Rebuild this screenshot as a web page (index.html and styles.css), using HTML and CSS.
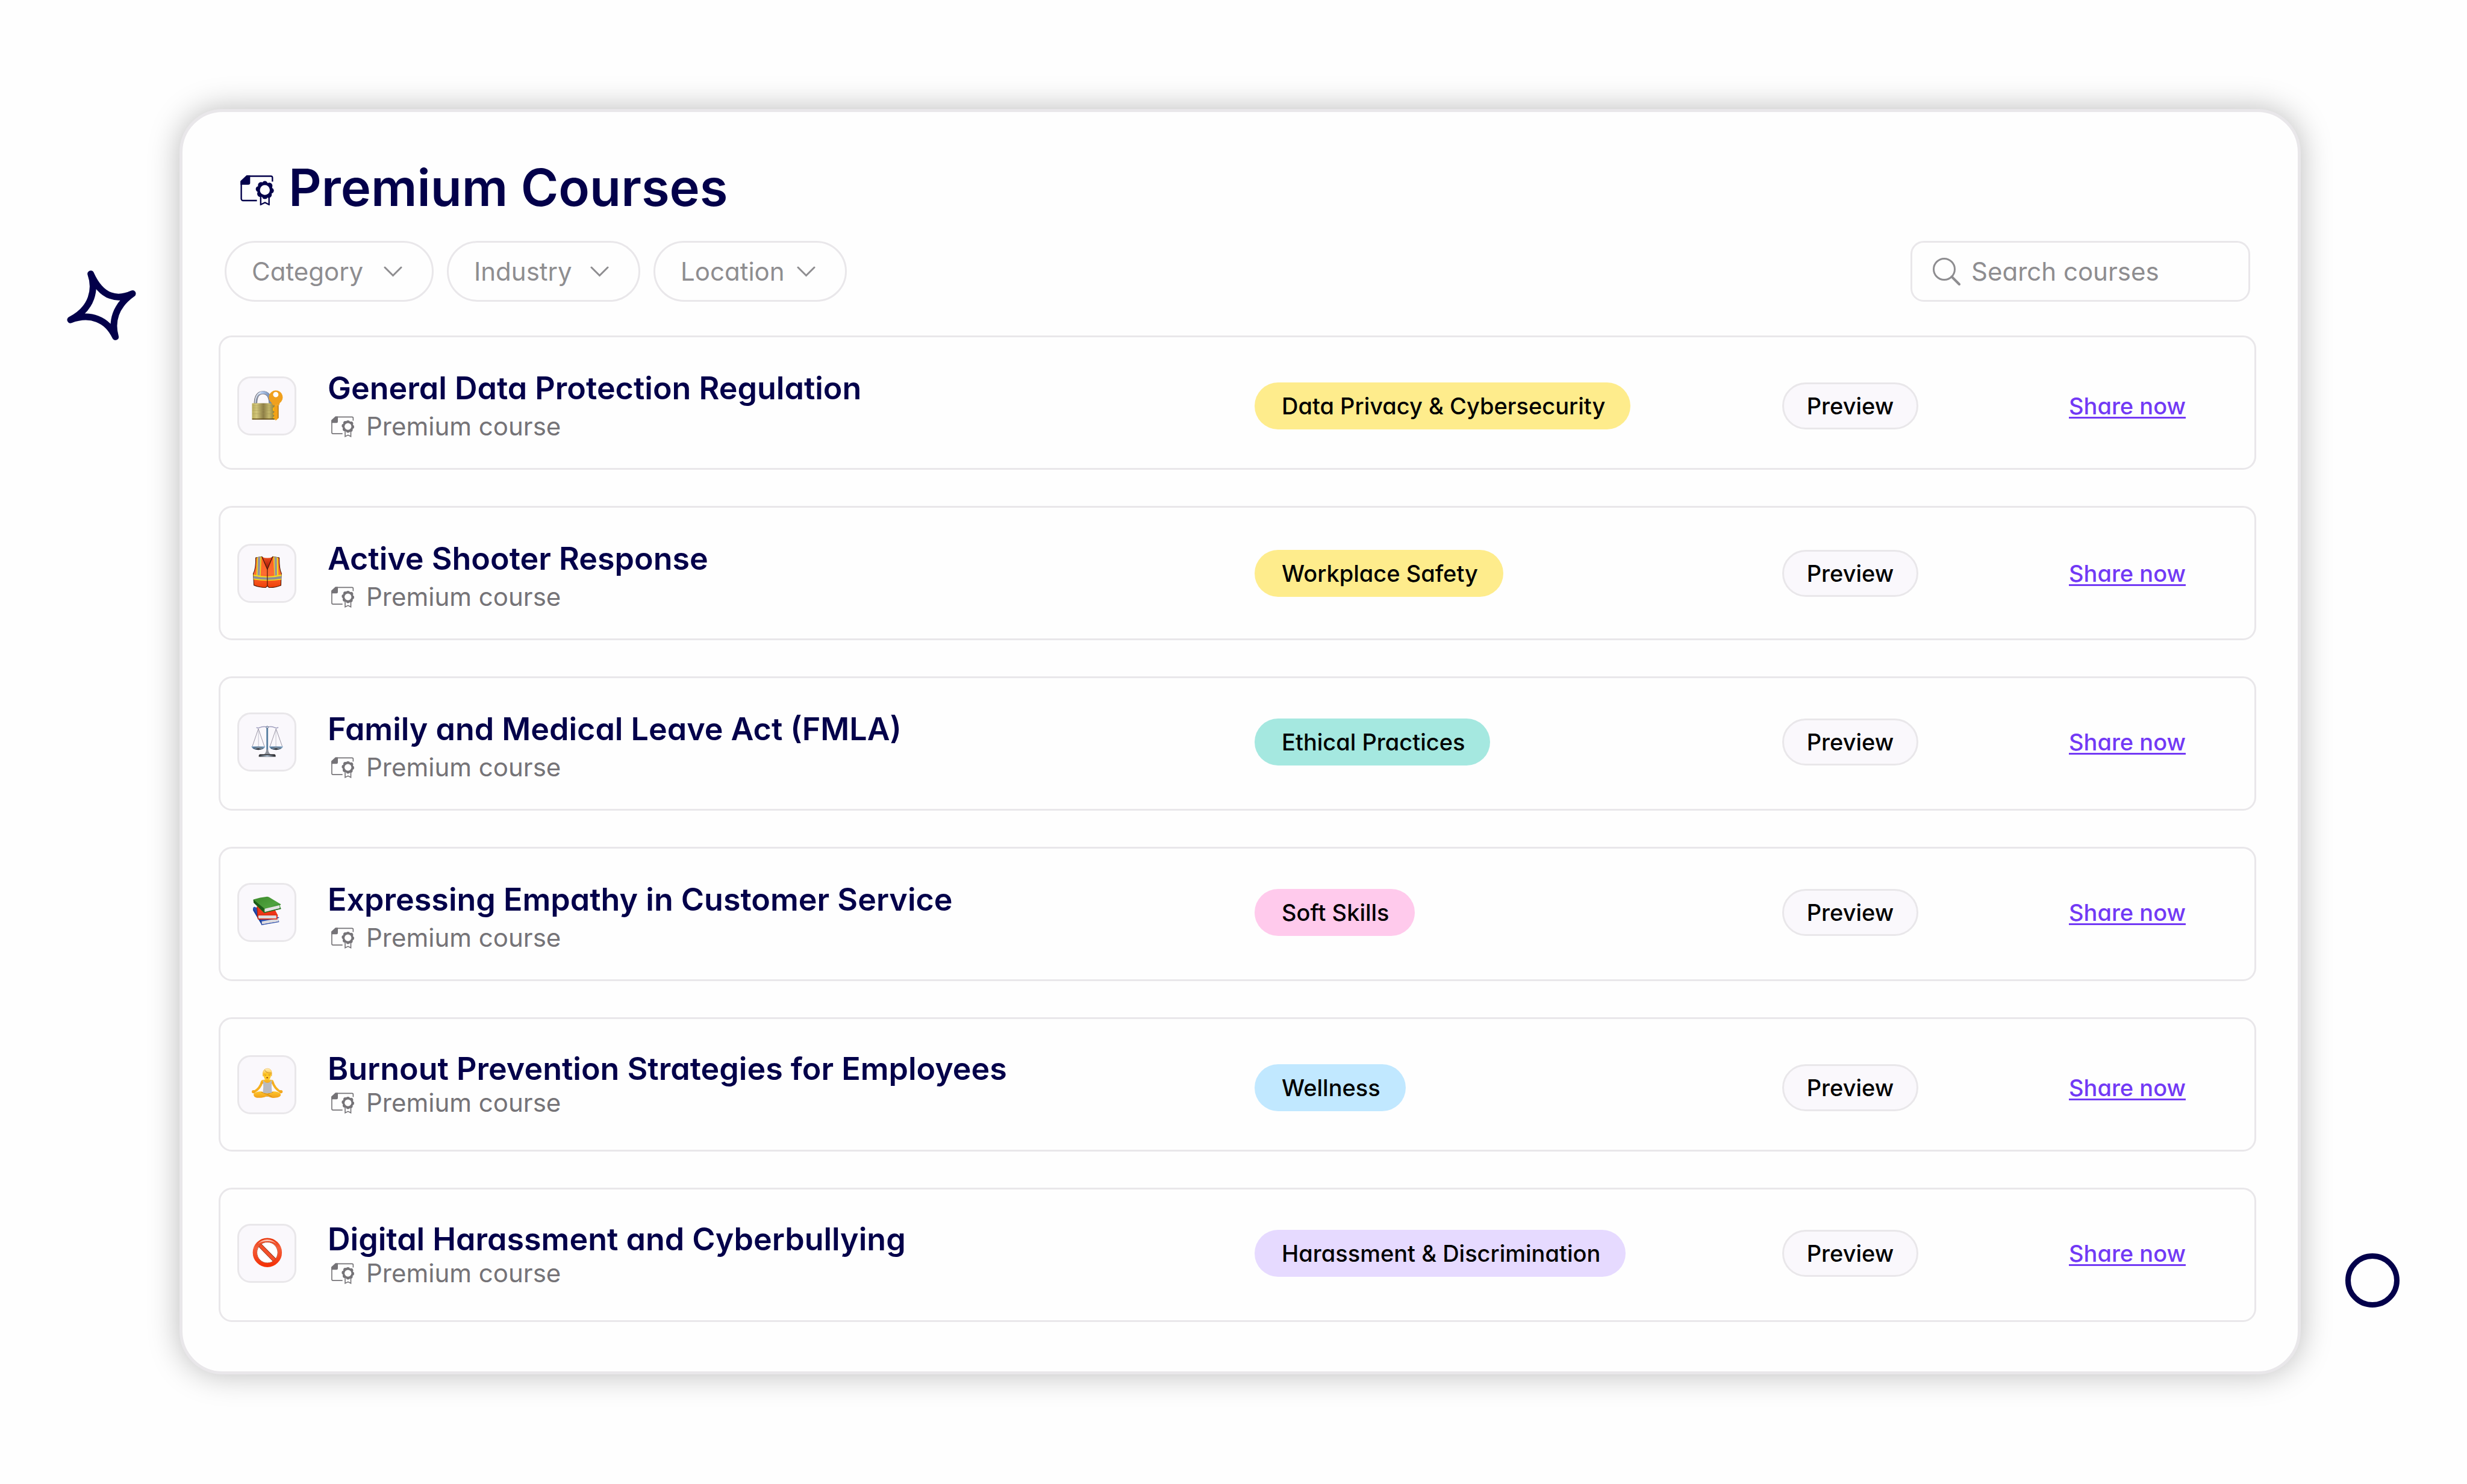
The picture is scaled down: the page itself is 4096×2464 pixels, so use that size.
FILE: index.html
```
<!DOCTYPE html>
<html lang="en">
<head>
<meta charset="utf-8">
<title>Premium Courses</title>
<meta name="viewport" content="width=device-width, initial-scale=1">
<link rel="stylesheet" href="styles.css">
</head>
<body>
<svg class="sprite" aria-hidden="true">
  <symbol id="certificate" viewBox="82 132 256 231">
    <path d="M327 180V151a12 12 0 0 0-12-12H130L88 178V312a14 14 0 0 0 14 14H208" fill="none" stroke="currentColor" stroke-width="11"/>
    <path d="M82 178L130 133H156V190a15 15 0 0 1-15 15H82z" fill="currentColor"/>
    <path d="M237 296V357L270 341L301 357V296" fill="none" stroke="currentColor" stroke-width="11"/>
    <g fill="currentColor">
      <circle cx="269" cy="245" r="58"/>
      <circle cx="269" cy="198" r="22"/><circle cx="303" cy="213" r="24"/>
      <circle cx="316" cy="250" r="22"/><circle cx="298" cy="281" r="24"/>
      <circle cx="269" cy="293" r="22"/><circle cx="234" cy="274" r="24"/>
      <circle cx="221" cy="238" r="22"/><circle cx="240" cy="208" r="24"/>
    </g>
    <circle cx="269" cy="245" r="38" fill="#fefefe"/>
  </symbol>
  <symbol id="chevron" viewBox="0 0 31 18">
    <path d="M2 2L15.500 15.500L29 2" fill="none" stroke="currentColor" stroke-width="3" stroke-linecap="round"/>
  </symbol>
</svg>

<svg class="deco-star" viewBox="145 131 523 530" aria-hidden="true">
  <path d="M325 157C365 270 340 420 171 506C320 450 450 500 512 635C480 520 510 400 642 307C530 358 410 345 325 157Z" fill="none" stroke="currentColor" stroke-width="50" stroke-linejoin="round"/>
</svg>
<span class="deco-ring" aria-hidden="true"></span>

<main class="panel">
  <header class="heading">
    <svg class="heading-icon" aria-hidden="true"><use href="#certificate"/></svg>
    <h1>Premium Courses</h1>
  </header>

  <form class="toolbar">
    <div class="filters">
      <div class="filter filter--wide">
        <select aria-label="Category"><option>Category</option></select>
        <svg class="chevron" aria-hidden="true"><use href="#chevron"/></svg>
      </div>
      <div class="filter">
        <select aria-label="Industry"><option>Industry</option></select>
        <svg class="chevron" aria-hidden="true"><use href="#chevron"/></svg>
      </div>
      <div class="filter">
        <select aria-label="Location"><option>Location</option></select>
        <svg class="chevron" aria-hidden="true"><use href="#chevron"/></svg>
      </div>
    </div>
    <label class="search">
      <svg class="search-icon" viewBox="0 0 46 46" aria-hidden="true">
        <circle cx="19" cy="19" r="17.500" fill="none" stroke="currentColor" stroke-width="3"/>
        <path d="M31.500 31.500L44 44" stroke="currentColor" stroke-width="4" stroke-linecap="round"/>
      </svg>
      <input type="search" placeholder="Search courses" aria-label="Search courses">
    </label>
  </form>

  <ul class="courses">
    <li class="course course--low course--low-tile">
      <span class="tile">
        <svg viewBox="132 167 420 420" aria-hidden="true">
          <defs>
            <linearGradient id="brass"><stop offset="0" stop-color="#b9ac5a"/><stop offset=".2" stop-color="#d3c77c"/><stop offset=".5" stop-color="#8c7d45"/><stop offset=".75" stop-color="#c4b86c"/><stop offset="1" stop-color="#8c7a35"/></linearGradient>
            <linearGradient id="shackle"><stop offset="0" stop-color="#7f8799"/><stop offset=".4" stop-color="#b4cdf3"/><stop offset="1" stop-color="#6d86b0"/></linearGradient>
          </defs>
          <path d="M257 358C257 310 275 276 312 276C345 276 368 298 370 358" fill="none" stroke="#6c6466" stroke-width="25"/>
          <path d="M257 358C257 310 275 275 312 275C345 275 368 298 370 358" fill="none" stroke="url(#shackle)" stroke-width="20"/>
          <path d="M254 355C254 315 270 285 296 276" fill="none" stroke="#f4f8ff" stroke-width="5"/>
          <rect x="230" y="357" width="172" height="123" rx="4" fill="url(#brass)"/>
          <path d="M232 376H398M232 392H398M232 410H398M232 436H398" stroke="#a19554" stroke-width="2"/>
          <path d="M231 476H401" stroke="#5b4310" stroke-width="7"/>
          <path d="M400 370V382L388 392V412L400 420L389 438L399 448L390 466L399 474L410 488L431 470V370Z" fill="#f2a118"/>
          <path d="M392 392V412M392 435V442M394 462V472" stroke="#ffc400" stroke-width="6"/>
          <path d="M428 372V470" stroke="#a56a13" stroke-width="5"/>
          <path fill-rule="evenodd" fill="#f0a01d" d="M411 260A52 52 0 0 1 440 355L436 371H388L380 355A52 52 0 0 1 411 260ZM410 271A20 20 0 1 0 410 311A20 20 0 1 0 410 271Z"/>
          <circle cx="410" cy="291" r="19" fill="#fff"/>
        </svg>
      </span>
      <div class="info">
        <h2>General Data Protection Regulation</h2>
        <p><svg class="kind-icon" aria-hidden="true"><use href="#certificate"/></svg>Premium course</p>
      </div>
      <div class="cell"><span class="tag tag--yellow">Data Privacy &amp; Cybersecurity</span></div>
      <div class="cell"><button class="preview" type="button">Preview</button></div>
      <div class="cell"><a class="share" href="#">Share now</a></div>
    </li>

    <li class="course">
      <span class="tile">
        <svg viewBox="132 128 420 420" aria-hidden="true">
          <defs>
            <linearGradient id="vest" x2="0" y2="1"><stop offset="0" stop-color="#fb5d20"/><stop offset=".55" stop-color="#ff6d33"/><stop offset="1" stop-color="#ee3f08"/></linearGradient>
            <linearGradient id="lining" x2="0" y2="1"><stop offset="0" stop-color="#f25020"/><stop offset="1" stop-color="#9c1204"/></linearGradient>
          </defs>
          <path d="M305 212Q346 232 386 212L346 305Z" fill="url(#lining)"/>
          <path d="M258 220L305 211L346 308L386 211L436 220C436 270 440 315 453 338C450 370 450 400 449 429Q400 448 358 445L346 434L334 445Q290 446 244 428C243 400 242 370 239 340C256 310 259 265 258 220Z" fill="url(#vest)" stroke="#4b1b0a" stroke-width="5" stroke-linejoin="round"/>
          <path d="M267 217L302 211L295 358L263 352Z" fill="#f5dc1c"/>
          <path d="M274 216L294 212L289 356L271 353Z" fill="#98949c"/>
          <path d="M391 211L427 218L430 352L399 358Z" fill="#f5dc1c"/>
          <path d="M399 213L418 216L420 354L403 356Z" fill="#98949c"/>
          <path d="M240 346Q346 376 453 346L451 386Q346 402 243 385Z" fill="#f5dc1c"/>
          <path d="M241 357Q346 380 453 357L452 378Q346 396 242 377Z" fill="#8f8d96"/>
          <path d="M346 302V438" stroke="#5a1e0a" stroke-width="6"/>
          <path d="M305 211L346 306L386 211" fill="none" stroke="#4b1b0a" stroke-width="4"/>
        </svg>
      </span>
      <div class="info">
        <h2>Active Shooter Response</h2>
        <p><svg class="kind-icon" aria-hidden="true"><use href="#certificate"/></svg>Premium course</p>
      </div>
      <div class="cell"><span class="tag tag--yellow">Workplace Safety</span></div>
      <div class="cell"><button class="preview" type="button">Preview</button></div>
      <div class="cell"><a class="share" href="#">Share now</a></div>
    </li>

    <li class="course course--high">
      <span class="tile">
        <svg viewBox="132 118 420 420" aria-hidden="true">
          <defs>
            <linearGradient id="steel"><stop offset="0" stop-color="#33383f"/><stop offset=".5" stop-color="#bfd6ee"/><stop offset="1" stop-color="#2b2b30"/></linearGradient>
            <linearGradient id="pan"><stop offset="0" stop-color="#4d7ba6"/><stop offset=".5" stop-color="#32363e"/><stop offset="1" stop-color="#7ea3c4"/></linearGradient>
          </defs>
          <path d="M278 228L232 362M278 228L324 362M412 228L366 362M412 228L459 362" stroke="#6a6478" stroke-width="3"/>
          <path d="M279 228V362M411 228V362" stroke="#a9aabb" stroke-width="3"/>
          <path d="M263 218Q275 226 290 218Q320 207 345 216Q372 207 400 218Q416 226 429 217" fill="none" stroke="#9e9dbd" stroke-width="7"/>
          <path d="M345 222V390" stroke="#4a6f90" stroke-width="13"/>
          <path d="M343 222V390" stroke="#7fa9cb" stroke-width="4"/>
          <circle cx="345" cy="216" r="8" fill="#d5e3f2" stroke="#4e5a78" stroke-width="4"/>
          <path d="M338 385H352Q354 412 372 422H320Q337 412 338 385Z" fill="#8e929b"/>
          <path d="M288 421H402Q412 428 409 440H281Q278 428 288 421Z" fill="#35363b"/>
          <rect x="290" y="429" width="110" height="9" fill="url(#steel)"/>
          <path d="M225 362H330Q320 388 278 388Q236 388 225 362Z" fill="url(#pan)"/>
          <path d="M360 362H465Q454 388 412 388Q370 388 360 362Z" fill="url(#pan)"/>
          <path d="M228 365H328M362 365H462" stroke="#8fb4d6" stroke-width="5"/>
          <path d="M248 377L278 372L304 377M382 377L412 372L438 377" fill="none" stroke="#aeb8c2" stroke-width="4"/>
        </svg>
      </span>
      <div class="info">
        <h2>Family and Medical Leave Act (FMLA)</h2>
        <p><svg class="kind-icon" aria-hidden="true"><use href="#certificate"/></svg>Premium course</p>
      </div>
      <div class="cell"><span class="tag tag--teal">Ethical Practices</span></div>
      <div class="cell"><button class="preview" type="button">Preview</button></div>
      <div class="cell"><a class="share" href="#">Share now</a></div>
    </li>

    <li class="course course--high">
      <span class="tile">
        <svg viewBox="132 108 420 420" aria-hidden="true">
          <defs>
            <linearGradient id="green" x2="1" y2="1"><stop offset="0" stop-color="#3c8a2c"/><stop offset=".6" stop-color="#4fa23e"/><stop offset="1" stop-color="#2c7a25"/></linearGradient>
          </defs>
          <path d="M238 282L248 275L437 357L425 364L435 388L304 413L238 302Z" fill="#2b50b4"/>
          <path d="M302 386L428 362L431 387L304 408Z" fill="#dddbe0"/>
          <path d="M238 285L302 384L304 413L238 302Z" fill="#1f3f98"/>
          <path d="M300 412L435 389" stroke="#1d3e9e" stroke-width="4"/>
          <path d="M268 272L405 300L425 338L420 368L276 370L270 345Z" fill="#ee3517"/>
          <path d="M280 340H414V364H280Q272 352 280 340Z" fill="#dcdadd"/>
          <path d="M276 338H425M276 369H422" stroke="#d42508" stroke-width="4"/>
          <path d="M268 274L275 368" stroke="#b41f08" stroke-width="5"/>
          <path d="M240 220Q290 202 345 198L358 202L449 256L441 266L449 290L322 321L242 244Z" fill="url(#green)"/>
          <path d="M240 221L322 287V321L242 244Z" fill="#1c5a18"/>
          <path d="M328 290L438 263L440 286L327 315Q323 302 328 290Z" fill="#e4e2e2"/>
          <path d="M322 319L449 289" stroke="#17661a" stroke-width="5"/>
        </svg>
      </span>
      <div class="info">
        <h2>Expressing Empathy in Customer Service</h2>
        <p><svg class="kind-icon" aria-hidden="true"><use href="#certificate"/></svg>Premium course</p>
      </div>
      <div class="cell"><span class="tag tag--pink">Soft Skills</span></div>
      <div class="cell"><button class="preview" type="button">Preview</button></div>
      <div class="cell"><a class="share" href="#">Share now</a></div>
    </li>

    <li class="course course--low course--tight">
      <span class="tile">
        <svg viewBox="132 116 420 420" aria-hidden="true">
          <defs>
            <linearGradient id="skin" x2="0" y2="1"><stop offset="0" stop-color="#ffc62a"/><stop offset="1" stop-color="#f0a01c"/></linearGradient>
            <linearGradient id="hair" x2="0" y2="1"><stop offset="0" stop-color="#fff0c8"/><stop offset=".5" stop-color="#ffd25a"/><stop offset="1" stop-color="#f7a90c"/></linearGradient>
          </defs>
          <path d="M306 302C298 335 282 360 244 382M384 302C394 335 408 360 448 382" fill="none" stroke="#f6b01f" stroke-width="18" stroke-linecap="round"/>
          <circle cx="240" cy="379" r="8" fill="none" stroke="#f3a51b" stroke-width="8"/>
          <circle cx="450" cy="379" r="8" fill="none" stroke="#f3a51b" stroke-width="8"/>
          <path d="M314 376H380L374 410L345 417L318 410Z" fill="#9a9aa6"/>
          <path d="M242 402C242 385 275 376 305 378L345 392L385 378C415 376 448 385 448 404C446 424 405 428 380 425Q360 420 345 413Q325 424 300 425C265 428 243 422 242 402Z" fill="url(#skin)"/>
          <path d="M300 382Q340 398 380 416M390 382Q365 390 350 397" fill="none" stroke="#c97a14" stroke-width="4"/>
          <path d="M305 291Q346 280 386 291Q396 300 392 318H298Q298 298 305 291Z" fill="url(#skin)"/>
          <path d="M318 291Q320 310 346 312Q372 310 374 291L380 293Q376 345 381 386Q346 394 312 386Q318 345 314 293Z" fill="#b9bac0"/>
          <path d="M332 270H360V292Q346 302 332 292Z" fill="#f5b01e"/>
          <path d="M316 240Q316 290 346 292Q374 290 375 240Q346 215 316 240Z" fill="#ffc828"/>
          <path d="M313 262Q304 205 346 203Q388 203 378 262L374 246Q345 246 330 225Q318 236 316 262Z" fill="url(#hair)" stroke="#eaa214" stroke-width="2"/>
          <path d="M326 214Q332 236 378 238" fill="none" stroke="#b36d0b" stroke-width="3"/>
          <path d="M324 251Q331 257 337 252M354 252Q361 257 367 251" fill="none" stroke="#9b5c0d" stroke-width="3"/>
          <ellipse cx="345" cy="273" rx="7" ry="4" fill="#8a3510"/>
        </svg>
      </span>
      <div class="info">
        <h2>Burnout Prevention Strategies for Employees</h2>
        <p><svg class="kind-icon" aria-hidden="true"><use href="#certificate"/></svg>Premium course</p>
      </div>
      <div class="cell"><span class="tag tag--blue">Wellness</span></div>
      <div class="cell"><button class="preview" type="button">Preview</button></div>
      <div class="cell"><a class="share" href="#">Share now</a></div>
    </li>

    <li class="course course--high course--tight">
      <span class="tile">
        <svg viewBox="132 105 420 420" aria-hidden="true">
          <defs>
            <linearGradient id="ban" x2="0" y2="1"><stop offset="0" stop-color="#e93a10"/><stop offset=".3" stop-color="#f4603c"/><stop offset="1" stop-color="#f43208"/></linearGradient>
            <linearGradient id="shine" x2="0" y2="1"><stop offset="0" stop-color="#ffd9cb"/><stop offset="1" stop-color="#f4603c"/></linearGradient>
          </defs>
          <circle cx="346" cy="309" r="78" fill="#fff"/>
          <path d="M282 246L404 370" stroke="#8d2c12" stroke-width="32"/>
          <path d="M282 246L404 370" stroke="#f4502a" stroke-width="25"/>
          <circle cx="346" cy="309" r="79" fill="none" stroke="#9a3a1c" stroke-width="4"/>
          <circle cx="346" cy="309" r="95" fill="none" stroke="url(#ban)" stroke-width="31"/>
          <path d="M272 248C305 198 385 198 418 248C385 215 310 215 272 248Z" fill="url(#shine)"/>
        </svg>
      </span>
      <div class="info">
        <h2>Digital Harassment and Cyberbullying</h2>
        <p><svg class="kind-icon" aria-hidden="true"><use href="#certificate"/></svg>Premium course</p>
      </div>
      <div class="cell"><span class="tag tag--purple">Harassment &amp; Discrimination</span></div>
      <div class="cell"><button class="preview" type="button">Preview</button></div>
      <div class="cell"><a class="share" href="#">Share now</a></div>
    </li>
  </ul>
</main>
</body>
</html>
```
FILE: styles.css
```
:root {
  --navy: #03004a;
  --grey: #8e8d90;
  --line: #e9e7ea;
  --surface: #fefefe;
  --soft: #faf8fc;
}

* {
  box-sizing: border-box;
}

body {
  position: relative;
  margin: 0;
  padding: 181px 276px 182px 298px;
  background: var(--surface);
  color: var(--navy);
  font-family: Inter, "Open Sans", sans-serif;
  font-feature-settings: "cv11";
}

h1, h2, p, ul {
  margin: 0;
  padding: 0;
}

select, input, button {
  margin: 0;
  font: inherit;
  font-feature-settings: inherit;
}

.sprite {
  position: absolute;
  width: 0;
  height: 0;
}

.deco-star {
  position: absolute;
  top: 449px;
  left: 111px;
  width: 115px;
  height: 116px;
}

.deco-ring {
  position: absolute;
  top: 2081px;
  right: 112px;
  width: 90px;
  height: 90px;
  border: 9px solid var(--navy);
  border-radius: 50%;
}

.panel {
  padding: 80px 69px 82px 60px;
  border: 5px solid var(--line);
  border-radius: 72px;
  background: var(--surface);
  box-shadow: 0 0 52px rgba(0, 0, 0, .27);
}

.heading {
  display: flex;
  align-items: center;
  gap: 24px;
  padding-left: 36px;
}

.heading-icon {
  width: 56px;
  height: 50px;
  margin-top: 8px;
}

h1 {
  font-size: 85px;
  font-weight: 600;
  line-height: 92px;
}

.toolbar {
  display: flex;
  justify-content: space-between;
  margin: 42px 10px 56px;
  color: var(--grey);
  font-size: 42px;
}

.filters {
  display: flex;
  gap: 22px;
}

.filter {
  position: relative;
  width: 321px;
}

.filter--wide {
  width: 347px;
}

.filter select {
  width: 100%;
  height: 101px;
  padding: 0 42px;
  border: 3px solid var(--line);
  border-radius: 51px;
  background: none;
  color: inherit;
  appearance: none;
}

.chevron {
  position: absolute;
  top: 42px;
  right: 52px;
  width: 31px;
  height: 18px;
  pointer-events: none;
}

.search {
  display: flex;
  align-items: center;
  gap: 18px;
  width: 564px;
  height: 101px;
  padding: 0 34px;
  border: 3px solid var(--line);
  border-radius: 22px;
}

.search-icon {
  flex: none;
  width: 46px;
  height: 46px;
}

.search input {
  flex: 1;
  min-width: 0;
  padding: 0;
  border: 0;
  outline: 0;
  background: none;
  color: inherit;
}

.search input::placeholder {
  color: inherit;
  opacity: 1;
}

.courses {
  display: grid;
  gap: 60px;
  list-style: none;
}

.course {
  display: grid;
  grid-template-columns: 150px minmax(0, 1fr) 876px 476px 308px;
  align-items: center;
  min-height: 223px;
  padding-left: 28px;
  border: 3px solid var(--line);
  border-radius: 22px;
}

.tile {
  width: 98px;
  height: 98px;
  border: 3px solid var(--line);
  border-radius: 22px;
  background: var(--soft);
}

.tile svg {
  display: block;
  width: 100%;
  height: 100%;
}

.info {
  align-self: start;
  padding-top: 55px;
}

h2 {
  font-size: 52px;
  font-weight: 600;
  line-height: 60px;
}

.info p {
  display: flex;
  align-items: center;
  gap: 20px;
  margin-top: 9px;
  padding-left: 6px;
  color: #757377;
  font-size: 42px;
  line-height: 48px;
}

.course--tight .info {
  padding-top: 53px;
}

.course--tight .info p {
  margin-top: 2px;
}

.kind-icon {
  width: 38px;
  height: 35px;
}

.cell {
  display: flex;
  font-size: 38px;
  font-weight: 500;
  line-height: 78px;
}

.course--low .cell,
.course--low-tile .tile {
  margin-top: 10px;
}

.course--high .cell,
.course--high .tile {
  margin-bottom: 5px;
}

.tag {
  padding: 0 42px 0 45px;
  border-radius: 39px;
  color: #000;
}

.tag--yellow { background: #feec8c; }
.tag--teal { background: #a5e8e0; }
.tag--pink { background: #ffcaec; }
.tag--blue { background: #c1e8ff; }
.tag--purple { background: #e6daff; }

.preview {
  width: 226px;
  height: 78px;
  padding: 0;
  border: 3px solid var(--line);
  border-radius: 39px;
  background: var(--soft);
  color: #000;
  line-height: 72px;
}

.share {
  color: #7239f5;
  text-decoration-thickness: 3px;
  text-underline-offset: 4px;
}
```
